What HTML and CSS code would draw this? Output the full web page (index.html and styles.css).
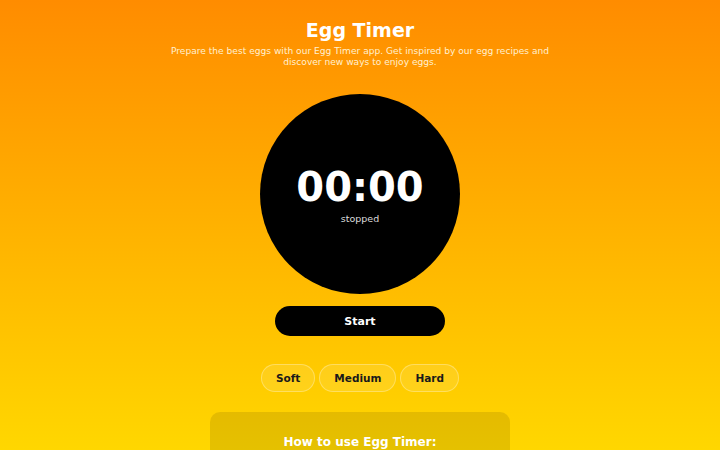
FILE: index.html
```html
<!DOCTYPE html>
<html>
<head>
<meta charset="utf-8">
<link rel="stylesheet" href="styles.css">
</head>
<body>
<main class="app">
  <h1 class="title">Egg Timer</h1>
  <p class="subtitle">Prepare the best eggs with our Egg Timer app. Get inspired by our egg recipes and discover new ways to enjoy eggs.</p>
  <div class="dial">
    <div class="time">00:00</div>
    <div class="status">stopped</div>
  </div>
  <button class="start">Start</button>
  <div class="presets">
    <button class="preset">Soft</button>
    <button class="preset">Medium</button>
    <button class="preset">Hard</button>
  </div>
  <section class="howto">
    <h2 class="howto-title">How to use Egg Timer:</h2>
  </section>
</main>
</body>
</html>
```
FILE: styles.css
```css
html, body {
  margin: 0;
  padding: 0;
  height: 100%;
}
body {
  font-family: "DejaVu Sans", sans-serif;
  background: linear-gradient(to bottom, #ff8c00, #ffd700);
  background-attachment: fixed;
  overflow: hidden;
}
.app {
  display: flex;
  flex-direction: column;
  align-items: center;
  padding-top: 17px;
}
.title {
  margin: 0;
  font-size: 19px;
  line-height: 26px;
  color: #fff;
  font-weight: bold;
}
.subtitle {
  margin: 3px 0 0;
  max-width: 390px;
  text-align: center;
  font-size: 9.1px;
  line-height: 11px;
  color: #fff0d0;
}
.dial {
  margin-top: 26px;
  width: 200px;
  height: 200px;
  border-radius: 50%;
  background: #000;
  display: flex;
  flex-direction: column;
  align-items: center;
  justify-content: center;
}
.time {
  font-size: 40px;
  font-weight: bold;
  color: #fff;
  line-height: 46px;
}
.status {
  font-size: 9.5px;
  line-height: 12px;
  color: #ddd;
  margin-top: 3px;
}
.start {
  margin-top: 12px;
  width: 170px;
  height: 30px;
  border: none;
  border-radius: 15px;
  background: #000;
  color: #fff;
  font-family: "DejaVu Sans", sans-serif;
  font-weight: bold;
  font-size: 11px;
  padding: 0;
}
.presets {
  margin-top: 28px;
  display: flex;
  gap: 4px;
}
.preset {
  height: 28px;
  padding: 0 14px;
  border-radius: 14px;
  border: 1px solid rgba(255, 255, 255, 0.3);
  background: rgba(255, 255, 255, 0.1);
  color: #1a1a1a;
  font-family: "DejaVu Sans", sans-serif;
  font-weight: bold;
  font-size: 10.5px;
}
.howto {
  margin-top: 20px;
  width: 300px;
  height: 120px;
  border-radius: 10px;
  background: rgba(0, 0, 0, 0.1);
  display: flex;
  justify-content: center;
}
.howto-title {
  margin: 23px 0 0;
  font-size: 12px;
  color: #fff;
  font-weight: bold;
}
```
